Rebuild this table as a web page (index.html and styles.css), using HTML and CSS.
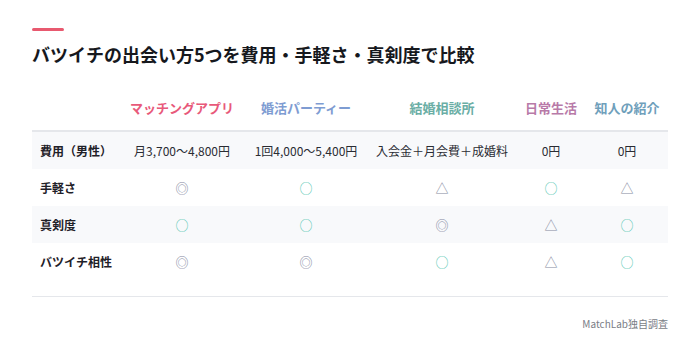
FILE: index.html
```html
<!DOCTYPE html>
<html lang="ja">
<head>
<meta charset="utf-8">
<link rel="stylesheet" href="styles.css">
</head>
<body>
<div class="page">
  <div class="accent"></div>
  <h1 class="title">バツイチの出会い方5つを費用・手軽さ・真剣度で比較</h1>
  <table class="cmp">
    <colgroup>
      <col class="c0"><col class="c1"><col class="c2"><col class="c3"><col class="c4"><col class="c5">
    </colgroup>
    <thead>
      <tr>
        <th></th>
        <th class="h-app">マッチングアプリ</th>
        <th class="h-party">婚活パーティー</th>
        <th class="h-agency">結婚相談所</th>
        <th class="h-daily">日常生活</th>
        <th class="h-friend">知人の紹介</th>
      </tr>
    </thead>
    <tbody>
      <tr class="alt">
        <td class="lbl">費用（男性）</td>
        <td>月3,700〜4,800円</td>
        <td>1回4,000〜5,400円</td>
        <td>入会金＋月会費＋成婚料</td>
        <td>0円</td>
        <td>0円</td>
      </tr>
      <tr>
        <td class="lbl">手軽さ</td>
        <td class="dbl">◎</td>
        <td class="ok">○</td>
        <td class="tri">△</td>
        <td class="ok">○</td>
        <td class="tri">△</td>
      </tr>
      <tr class="alt">
        <td class="lbl">真剣度</td>
        <td class="ok">○</td>
        <td class="ok">○</td>
        <td class="dbl">◎</td>
        <td class="tri">△</td>
        <td class="ok">○</td>
      </tr>
      <tr>
        <td class="lbl">バツイチ相性</td>
        <td class="dbl">◎</td>
        <td class="dbl">◎</td>
        <td class="ok">○</td>
        <td class="tri">△</td>
        <td class="ok">○</td>
      </tr>
    </tbody>
  </table>
  <div class="rule"></div>
  <p class="source">MatchLab独自調査</p>
</div>
</body>
</html>
```
FILE: styles.css
```css
html, body {
  margin: 0;
  padding: 0;
  background: #ffffff;
}
body {
  font-family: "Noto Sans CJK JP", "Noto Sans", sans-serif;
  color: #1f2128;
}
.page {
  padding: 28px 32px 0 32px;
}
.accent {
  width: 32px;
  height: 3px;
  background: #e8596f;
  border-radius: 2px;
}
.title {
  margin: 10px 0 0 0;
  font-size: 18px;
  line-height: 27px;
  font-weight: 700;
  color: #16181d;
}
.cmp {
  margin-top: 18px;
  width: 636px;
  border-collapse: collapse;
  table-layout: fixed;
}
.c0 { width: 88px; }
.c1 { width: 124px; }
.c2 { width: 124px; }
.c3 { width: 148px; }
.c4 { width: 70px; }
.c5 { width: 82px; }
.cmp th {
  font-size: 13px;
  line-height: 20px;
  font-weight: 700;
  padding: 12px 0;
  text-align: center;
  border-bottom: 2px solid #e5e7eb;
  white-space: nowrap;
}
.h-app { color: #e8597a; }
.h-party { color: #7e9cd2; }
.h-agency { color: #6aaea5; }
.h-daily { color: #b87aa8; }
.h-friend { color: #6fa0bb; }
.cmp td {
  font-size: 12px;
  line-height: 19px;
  padding: 9px 0;
  text-align: center;
  color: #2a2c33;
  white-space: nowrap;
}
.cmp tr.alt td {
  background: #f8f9fb;
}
.cmp td.lbl {
  text-align: left;
  padding-left: 8px;
  font-weight: 700;
  color: #1f2128;
}
.cmp td.dbl,
.cmp td.ok,
.cmp td.tri {
  font-size: 13px;
}
.cmp td.dbl { color: #868aa2; }
.cmp td.ok { color: #52c6b1; }
.cmp td.tri { color: #84889e; }
.rule {
  margin-top: 16px;
  height: 1px;
  background: #e5e7eb;
}
.source {
  margin: 19px 0 0 0;
  text-align: right;
  font-size: 10px;
  line-height: 15px;
  color: #7a7d86;
}
```
